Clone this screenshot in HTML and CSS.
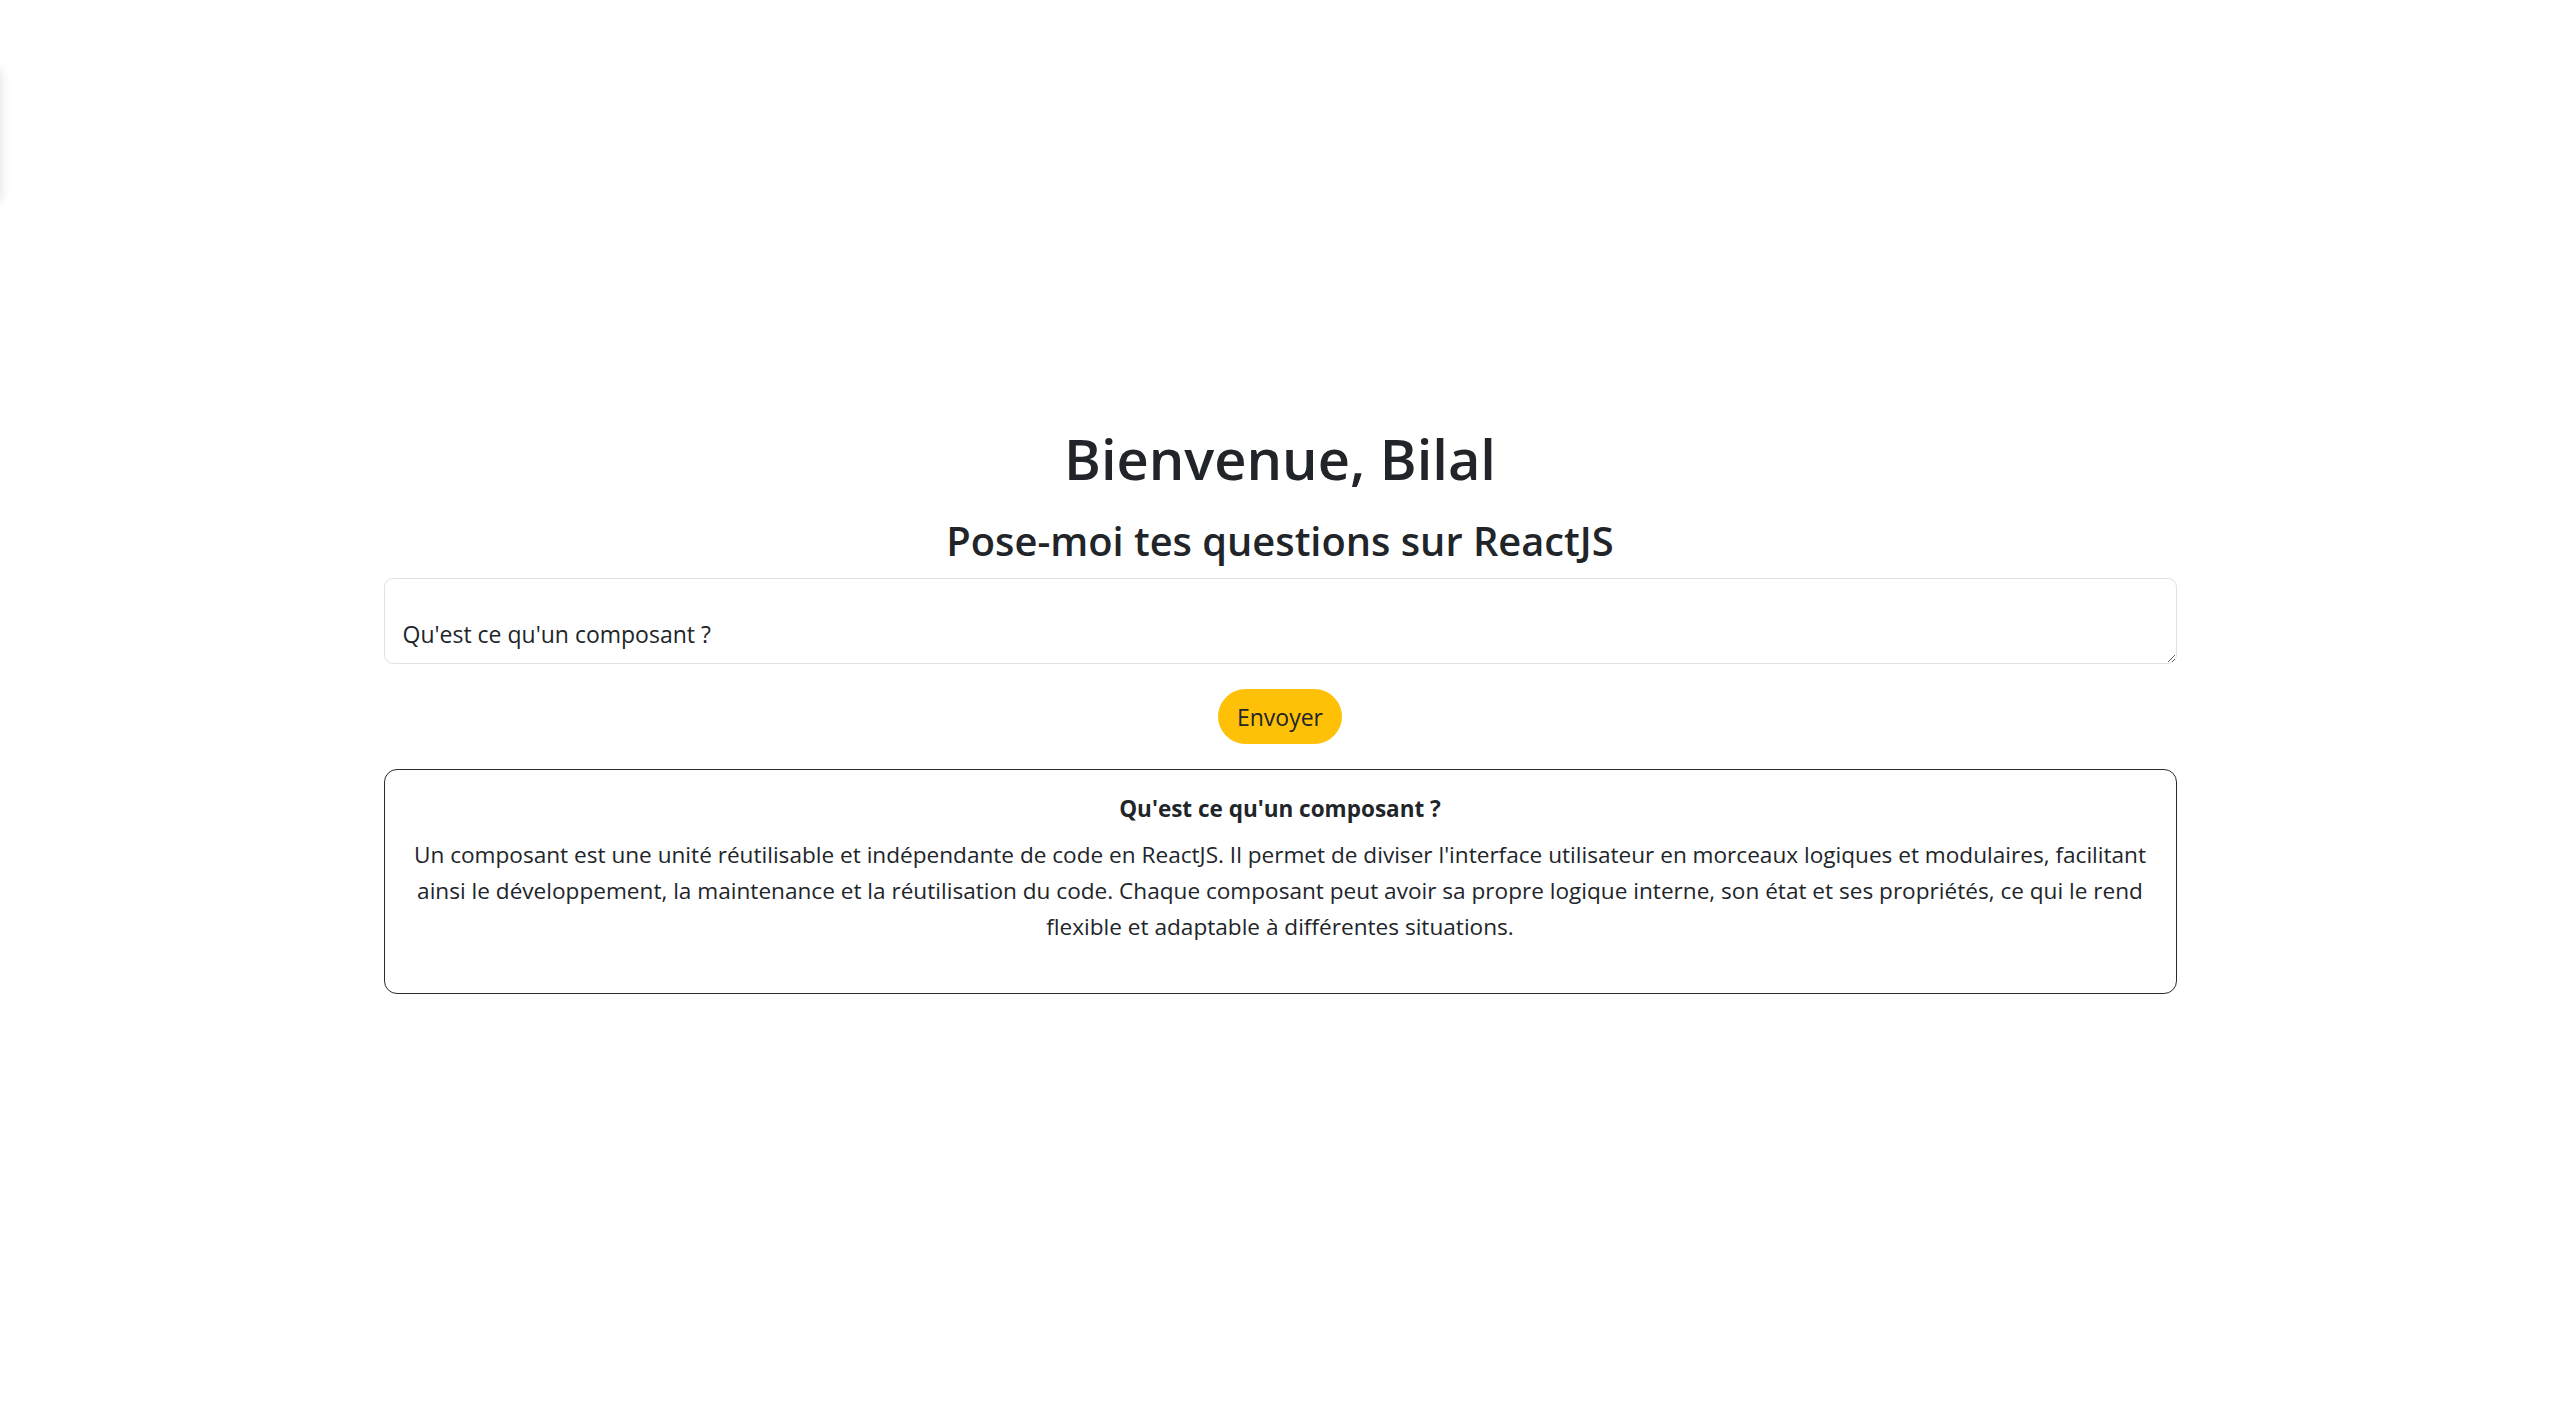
FILE: index.html
```html
<!DOCTYPE html>
<html lang="fr">
<head>
<meta charset="utf-8">
<title>ReactJS Chat</title>
<link rel="stylesheet" href="styles.css">
</head>
<body>
<aside class="side-panel"></aside>
<main class="chat">
  <h1 class="chat-title">Bienvenue, Bilal</h1>
  <h3 class="chat-subtitle">Pose-moi tes questions sur ReactJS</h3>
  <form class="chat-form">
    <textarea class="chat-input">Qu'est ce qu'un composant ?</textarea>
    <button type="button" class="chat-send">Envoyer</button>
  </form>
  <section class="answer">
    <h6 class="answer-question">Qu'est ce qu'un composant ?</h6>
    <p class="answer-text">Un composant est une unité réutilisable et indépendante de code en ReactJS. Il permet de diviser l'interface utilisateur en morceaux logiques et modulaires, facilitant ainsi le développement, la maintenance et la réutilisation du code. Chaque composant peut avoir sa propre logique interne, son état et ses propriétés, ce qui le rend flexible et adaptable à différentes situations.</p>
  </section>
</main>
</body>
</html>
```
FILE: styles.css
```css
* { box-sizing: border-box; }
html, body {
  margin: 0;
  padding: 0;
  background: #ffffff;
}
body {
  font-family: "Open Sans", "Noto Sans", "Liberation Sans", sans-serif;
  color: #212529;
  font-size: 23px;
  line-height: 1.5;
}
.side-panel {
  position: fixed;
  left: -300px;
  top: 68px;
  width: 300px;
  height: 135px;
  border-radius: 8px;
  background: #fff;
  box-shadow: 0 0 12px rgba(0, 0, 0, 0.14);
}
.chat {
  width: 1793px;
  margin: 0 auto;
  padding-top: 422px;
  text-align: center;
}
.chat-title {
  margin: 0 0 22px;
  font-size: 56px;
  font-weight: 600;
  line-height: 72px;
}
.chat-subtitle {
  margin: 0 0 12px;
  font-size: 39.8px;
  font-weight: 600;
  line-height: 50px;
}
.chat-form {
  display: flex;
  flex-direction: column;
  align-items: center;
}
.chat-input {
  display: block;
  width: 100%;
  height: 86px;
  padding: 37px 18px 10px;
  font-family: inherit;
  font-size: 23px;
  line-height: 36px;
  color: #212529;
  border: 1px solid #dee2e6;
  border-radius: 9px;
  resize: vertical;
  outline: none;
}
.chat-send {
  margin-top: 25px;
  height: 55px;
  padding: 0 18px;
  font-family: inherit;
  font-size: 23px;
  line-height: 36px;
  color: #212529;
  background: #ffc107;
  border: 1px solid #ffc107;
  border-radius: 40px;
  cursor: pointer;
}
.answer {
  margin-top: 25px;
  padding: 24px;
  border: 1px solid #2b2b2b;
  border-radius: 13px;
}
.answer-question {
  margin: 0 0 14px;
  font-size: 22.5px;
  font-weight: 700;
  line-height: 29px;
}
.answer-text {
  margin: 0 0 24px;
  font-size: 22.6px;
  line-height: 36px;
}
```
